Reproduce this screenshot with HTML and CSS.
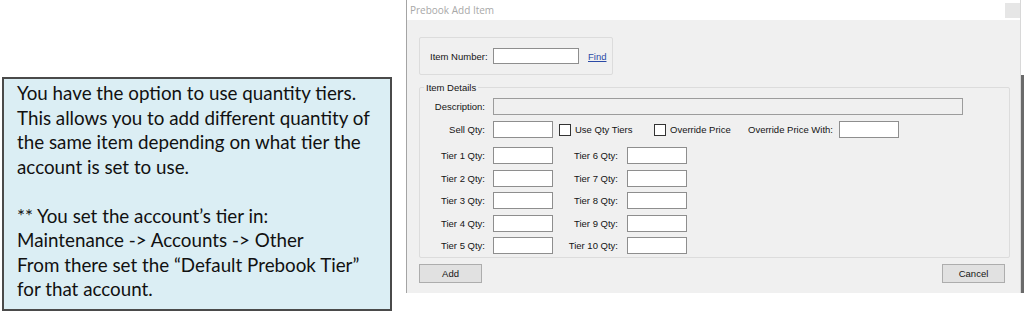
FILE: index.html
```html
<!DOCTYPE html>
<html>
<head>
<meta charset="utf-8">
<link rel="stylesheet" href="styles.css">
</head>
<body>
<div class="page">
  <div class="note-col">
    <div class="note">
      <p>You have the option to use quantity tiers.<br>This allows you to add different quantity of<br>the same item depending on what tier the<br>account is set to use.</p>
      <p>** You set the account’s tier in:<br>Maintenance -&gt; Accounts -&gt; Other<br>From there set the “Default Prebook Tier”<br>for that account.</p>
    </div>
  </div>
  <div class="dialog">
    <div class="titlebar"><span class="title">Prebook Add Item</span><span class="close"></span></div>
    <div class="dlg-body">
      <div class="group-item">
        <span class="lbl lbl-item">Item Number:</span><span class="tb tb-item"></span><a class="find">Find</a>
      </div>
      <fieldset class="details">
        <legend>Item Details</legend>
        <div class="row row-desc"><span class="lbl c1">Description:</span><span class="tb tb-desc"></span></div>
        <div class="row row-sell">
          <span class="lbl c1">Sell Qty:</span><span class="tb tb-qty"></span>
          <span class="cb cb1"></span><span class="lbl cbl1">Use Qty Tiers</span>
          <span class="cb"></span><span class="lbl cbl2">Override Price</span>
          <span class="lbl opw">Override Price With:</span><span class="tb tb-qty"></span>
        </div>
        <div class="tiers">
          <div class="row"><span class="lbl c1">Tier 1 Qty:</span><span class="tb tb-qty"></span><span class="lbl c2">Tier 6 Qty:</span><span class="tb tb-qty"></span></div>
          <div class="row"><span class="lbl c1">Tier 2 Qty:</span><span class="tb tb-qty"></span><span class="lbl c2">Tier 7 Qty:</span><span class="tb tb-qty"></span></div>
          <div class="row"><span class="lbl c1">Tier 3 Qty:</span><span class="tb tb-qty"></span><span class="lbl c2">Tier 8 Qty:</span><span class="tb tb-qty"></span></div>
          <div class="row"><span class="lbl c1">Tier 4 Qty:</span><span class="tb tb-qty"></span><span class="lbl c2">Tier 9 Qty:</span><span class="tb tb-qty"></span></div>
          <div class="row"><span class="lbl c1">Tier 5 Qty:</span><span class="tb tb-qty"></span><span class="lbl c2">Tier 10 Qty:</span><span class="tb tb-qty"></span></div>
        </div>
      </fieldset>
      <div class="buttons"><span class="btn">Add</span><span class="btn">Cancel</span></div>
    </div>
  </div>
  <div class="edge"></div>
</div>
</body>
</html>
```
FILE: styles.css
```css
* { box-sizing: border-box; }
html, body { margin: 0; padding: 0; background: #ffffff; }
.page {
  display: flex;
  width: 1024px;
  height: 313px;
  overflow: hidden;
  background: #ffffff;
}
.note-col {
  width: 406px;
  flex: none;
  padding: 77px 0 0 2px;
}
.note {
  width: 390px;
  height: 234px;
  border: 2px solid #4a4a4a;
  background: #dbeef4;
  padding: 2px 0 0 13px;
  font-family: Lato, "Open Sans", sans-serif;
  font-size: 18.8px;
  line-height: 24.5px;
  color: #111111;
  white-space: nowrap;
}
.note p { margin: 0 0 24.5px 0; }
.dialog {
  width: 615px;
  height: 293px;
  flex: none;
  display: flex;
  flex-direction: column;
  border-left: 1px solid #a4a4a4;
  border-right: 1px solid #d8d8d8;
  font-family: "Liberation Sans", Arial, sans-serif;
  font-size: 9.5px;
  color: #141414;
}
.titlebar {
  height: 20px;
  flex: none;
  background: #ffffff;
  display: flex;
  align-items: center;
  justify-content: space-between;
  padding: 0 0 0 3px;
}
.title {
  font-family: "Open Sans", sans-serif;
  font-size: 10px;
  color: #a8a8a8;
}
.close {
  width: 15px;
  height: 15px;
  background: #e6e6e6;
}
.dlg-body {
  flex: 1;
  background: #f0f0f0;
  padding: 17px 15px 10px 12px;
  display: flex;
  flex-direction: column;
}
.group-item {
  width: 194px;
  height: 38px;
  border: 1px solid #dcdcdc;
  border-radius: 2px;
  display: flex;
  align-items: center;
  padding-left: 10px;
}
.lbl { white-space: nowrap; }
.lbl-item { width: 63px; }
.tb {
  display: block;
  height: 17px;
  background: #ffffff;
  border: 1px solid #8e8e8e;
  flex: none;
}
.tb-item { width: 86px; height: 16px; }
.find {
  margin-left: 9px;
  color: #2b4aa6;
  text-decoration: underline;
}
.details {
  margin: 6px 0 0 0;
  padding: 0 0 3px 0;
  width: 591px;
  border: 1px solid #dcdcdc;
  border-radius: 2px;
  min-width: 0;
}
.details legend {
  margin-left: 4px;
  padding: 0 2px;
  line-height: 13px;
  font-size: 9.5px;
}
.row {
  display: flex;
  align-items: center;
  height: 17px;
}
.row-desc { margin-top: 4px; }
.row-sell { margin-top: 6px; }
.tiers {
  margin-top: 9px;
  display: flex;
  flex-direction: column;
  gap: 5.5px;
}
.c1 { width: 65px; text-align: right; margin-right: 8px; flex: none; }
.c2 { width: 65px; text-align: right; margin-right: 9px; flex: none; }
.tb-desc { width: 470px; background: #f0f0f0; border-color: #9c9c9c; }
.tb-qty { width: 60px; }
.cb {
  width: 12px;
  height: 12px;
  border: 1px solid #333333;
  background: #ffffff;
  flex: none;
}
.cb1 { margin-left: 6px; }
.cbl1 { width: 83px; padding-left: 4px; }
.cbl2 { width: 82px; padding-left: 4px; }
.opw { width: 91px; }
.buttons {
  margin-top: 6px;
  display: flex;
  justify-content: space-between;
}
.btn {
  width: 63px;
  height: 19px;
  border: 1px solid #adadad;
  background: #e1e1e1;
  display: flex;
  align-items: center;
  justify-content: center;
}
.edge {
  width: 3px;
  flex: none;
  margin-top: 75px;
  height: 218px;
  background: #6a6a6a;
}
```
